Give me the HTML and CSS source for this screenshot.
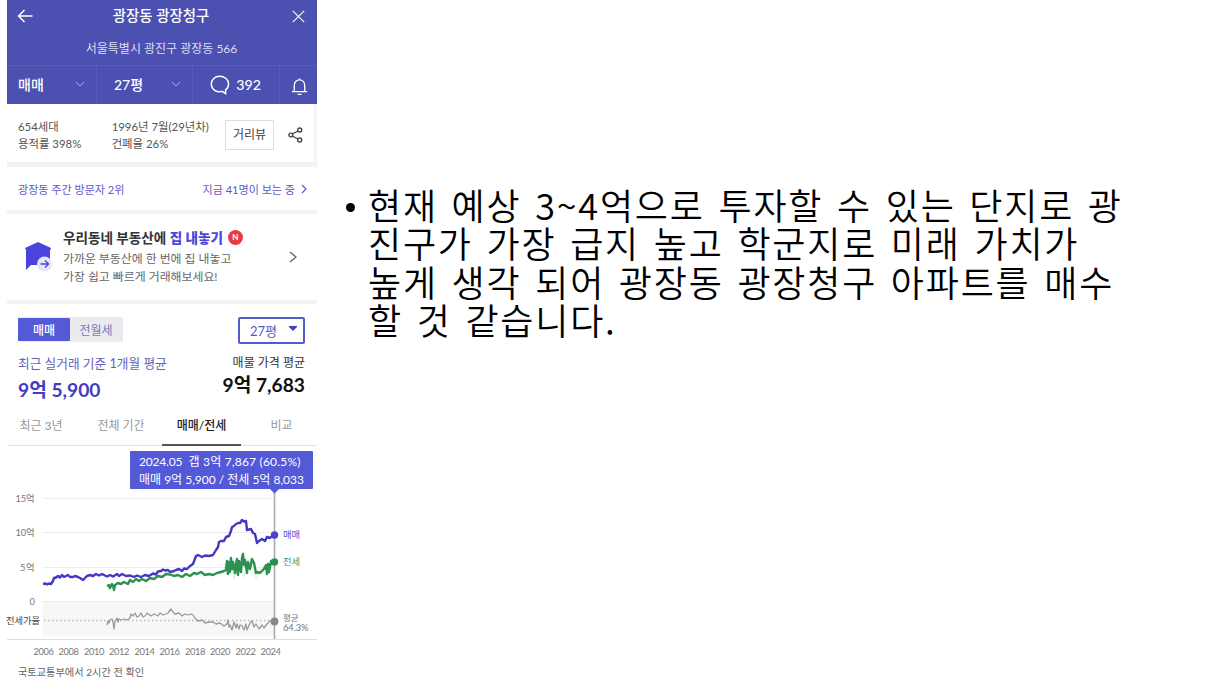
FILE: index.html
```
<!DOCTYPE html>
<html lang="ko">
<head>
<meta charset="utf-8">
<title>광장동 광장청구</title>
<link rel="stylesheet" href="styles.css">
</head>
<body>
<div class="slide">
  <aside class="phone">
    <header class="top">
      <div class="title-row">
        <svg class="icon" width="16" height="14" viewBox="0 0 16 14"><path d="M15.500 7H1.500M7.500 1L1.500 7L7.500 13" stroke-width="1.500"/></svg>
        <h1 class="title">광장동 광장청구</h1>
        <svg class="icon" width="13" height="13" viewBox="0 0 13 13"><path d="M.8.8L12.200 12.200M12.200.8L.8 12.200" stroke-width="1.100"/></svg>
      </div>
      <div class="address">서울특별시 광진구 광장동 566</div>
      <div class="filters">
        <div class="filter kind">매매<svg class="icon dim" width="10" height="6" viewBox="0 0 10 6"><path d="M1 1L5 5L9 1"/></svg></div>
        <div class="filter size">27평<svg class="icon dim" width="10" height="6" viewBox="0 0 10 6"><path d="M1 1L5 5L9 1"/></svg></div>
        <div class="filter talk"><svg class="icon" width="20" height="20" viewBox="0 0 20 20"><path d="M12 16.400C7 18 1.300 14.500 1.300 9C1.300 4.500 5 1.300 9.800 1.300S18.600 4.700 18.600 9C18.600 11.300 17.300 13.600 15.600 14.800V18.600Z" stroke-width="1.500"/></svg>392</div>
        <div class="filter bell"><svg class="icon" width="17" height="19" viewBox="0 0 18 20"><path d="M3.500 15V9C3.500 5.500 5.700 3 9 3S14.500 5.500 14.500 9V15M1 15.500H17M9 3V1.500M7 18.300H11" stroke-width="1.400"/></svg></div>
      </div>
    </header>

    <section class="info">
      <div class="facts first">654세대<br>용적률 398%</div>
      <div class="facts second">1996년 7월(29년차)<br>건폐율 26%</div>
      <div class="review">거리뷰</div>
      <svg class="share" width="15" height="16" viewBox="0 0 15 16"><path d="M4.200 7L10 4M4.200 9L10 12"/><circle cx="2.800" cy="8" r="1.900"/><circle cx="11.700" cy="3" r="2"/><circle cx="11.700" cy="13" r="2"/></svg>
    </section>

    <section class="visitors">
      <span class="rank">광장동 주간 방문자 2위</span>
      <span class="now">지금 41명이 보는 중<svg width="6" height="10" viewBox="0 0 6 10"><path d="M1 1L5 5L1 9"/></svg></span>
    </section>

    <section class="promo">
      <svg class="house" width="28" height="30" viewBox="0 0 28 30"><path d="M0 6L13 0L26 6L25 9V23H6L1 28V8Z" fill="#4b43dc"/><circle cx="19.500" cy="22" r="7.500" fill="#e5e5fc"/><path d="M15.500 22H23M20 18.500L23.500 22L20 25.500" fill="none" stroke="#4b43dc" stroke-width="1.400"/></svg>
      <div class="promo-copy">
        <div class="promo-title"><span>우리동네 부동산에 <b>집 내놓기</b></span><i class="new">N</i></div>
        <div class="promo-line">가까운 부동산에 한 번에 집 내놓고</div>
        <div class="promo-line">가장 쉽고 빠르게 거래해보세요!</div>
      </div>
      <svg class="go" width="8" height="12" viewBox="0 0 8 12"><path d="M1 1L7 6L1 11"/></svg>
    </section>

    <section class="price">
      <div class="switches">
        <div class="segment"><span class="on">매매</span><span class="off">전월세</span></div>
        <div class="select">27평<svg width="8" height="5" viewBox="0 0 8 5"><path d="M0 0H8V1L4 5L0 1Z" fill="#3f43b4"/></svg></div>
      </div>
      <div class="averages">
        <div class="recent"><div class="caption">최근 실거래 기준 1개월 평균</div><div class="amount">9억 5,900</div></div>
        <div class="listing"><div class="caption">매물 가격 평균</div><div class="amount">9억 7,683</div></div>
      </div>
    </section>

    <nav class="tabs"><span class="t1">최근 3년</span><span class="t2">전체 기간</span><span class="t3">매매/전세</span><span class="t4">비교</span></nav>

    <svg class="chart" width="313" height="214" viewBox="4 446 313 214">
      <rect x="43" y="601" width="231" height="35" fill="#f7f7f7"/>
      <path d="M43 498.500H274M43 532.500H274M43 567.500H274M43 601.500H274" stroke="#ededed"/>
      <path d="M7 639.500H317" stroke="#dedede"/>
      <path d="M44 620.500H274" stroke="#bbb" stroke-width="1.300" stroke-dasharray="1.500 2.500"/>
      <path d="M274.500 487V639" stroke="#aaa" stroke-width="1.600"/>
      <path class="ratio" d="M107 625L108 621L109 623L110 620L112 619L113 622L114 629L115 621L117 618L118 622L119 619L121 620L124 619L127 620L130 618L131 614L133 616L135 613L137 617L139 616L141 613L143 617L145 616L147 613L151 616L154 614L158 616L160 613L163 615L166 614L168 613L171 609L173 612L175 614L179 613L182 616L185 614L188 615L191 614L193 615L195 618L198 621L202 620L205 623L209 622L213 622L216 624L220 623L224 626L227 624L228 620L229 627L230 625L232 630L234 622L236 628L237 624L239 629L240 625L242 626L244 630L246 624L247 630L250 623L252 621L254 627L256 624L259 629L262 625L264 628L267 624L270 621L272 622L274 621.500"/>
      <path class="sale" d="M43 584L46 583.500L47 584.500L49 583.500L51 584L53 581L54 578L56 577.500L58 576L60 577.500L62 575L64 577L66 576L68 575L70 577L73 577L75 576L78 577L80 578L83 580L85 578L87 576L90 575L93 576L96 574L99 575.500L102 574L105 575.500L107 576.500L110 575L113 576.500L117 574L119 576L122 574L126 576L130 575.500L134 577L137 575.500L141 577L145 575L149 576L153 573.500L156 574.500L158 571.500L161 571L163 569.500L165 570.500L168 570L170 572L174 571L176 570L179 569L182 571L184 568.500L187 569L190 566L193 564L196 556L198 555L202 557L205 555.500L209 556L213 555L216 550L218 547L219 542L221 541L224 541L226 537L229 536L231 531L232 527L234 526L236 524L238 523L240 523L242 520L244 521.500L246 521L247 530L251 529L253 533L255 534L257 543L259 541L262 539L265 541L267 537L270 538L272 536L274 535"/>
      <path class="rent-haze" d="M224 563L227 575L230 559L234 579L239 561L244 577L250 559L256 578L263 566L270 574"/>
      <path class="rent" d="M107 586L109 585L110 588L112 584L113 586L114 590L115 585L118 583L121 584L124 582L128 584L130 580L133 582L136 579L139 581L142 579L146 581L150 578L154 579L158 576L162 577L166 574L170 574.500L174 576L178 575L182 577L186 574L190 576L194 573L197 574L201 572L205 575L209 574L213 575L217 573L221 572L224 571L226 570L227 561L228 574L229 562L230 572L231 558L232 569L233 562L235 573L236 564L237 559L238 575L239 561L241 572L242 558L243 554L244 565L245 560L247 573L248 562L250 569L252 559L254 563L256 573L258 572L260 573L262 571L264 569L266 565L267 574L268 564L269 572L271 561L272 564L274 562"/>
      <circle cx="274.500" cy="535" r="3.700" fill="#4b43ce"/><circle cx="274.500" cy="562" r="3.700" fill="#2c9150"/><circle cx="274.500" cy="621.500" r="3.900" fill="#888"/>
      <g class="axis">
        <text x="15.500" y="501.500" textLength="19">15억</text><text x="15.500" y="536" textLength="19">10억</text><text x="20" y="570.500" textLength="14.500">5억</text><text x="29.500" y="604.500">0</text>
        <text class="rate" x="6" y="623.500" textLength="34">전세가율</text>
        <text x="33.500" y="655" textLength="20.500">2006</text><text x="58.500" y="655" textLength="20.500">2008</text><text x="84" y="655" textLength="20.500">2010</text><text x="109" y="655" textLength="20.500">2012</text><text x="134.500" y="655" textLength="20.500">2014</text><text x="159.500" y="655" textLength="20.500">2016</text><text x="185" y="655" textLength="20.500">2018</text><text x="210" y="655" textLength="20.500">2020</text><text x="235.500" y="655" textLength="20.500">2022</text><text x="260.500" y="655" textLength="20.500">2024</text>
        <text x="283" y="538" textLength="17" fill="#564fd0">매매</text><text x="283" y="564.500" textLength="17" fill="#3e9b5e">전세</text>
        <text x="283" y="620.500" textLength="15.500" font-size="8.500">평균</text><text x="283" y="631" textLength="25.500">64.3%</text>
      </g>
      <path d="M131 451H312Q313 451 313 452V488Q313 489 312 489H279L274.500 493.500L270 489H131Q130 489 130 488V452Q130 451 131 451Z" fill="#5459d8"/>
      <g class="tip"><text x="139" y="465.500" textLength="43.500">2024.05</text><text x="188.500" y="465.500" textLength="112">갭 3억 7,867 (60.5%)</text><text x="139" y="483.500" textLength="165">매매 9억 5,900 / 전세 5억 8,033</text></g>
    </svg>
    <footer class="source">국토교통부에서 2시간 전 확인</footer>
  </aside>

  <main class="note">
    <span class="bullet"></span>
    <p class="body-text">현재 예상 3~4억으로 투자할 수 있는 단지로 광<br>진구가 가장 급지 높고 학군지로 미래 가치가<br>높게 생각 되어 광장동 광장청구 아파트를 매수<br>할 것 같습니다.</p>
  </main>
</div>
</body>
</html>
```
FILE: styles.css
```
* { box-sizing: border-box; }
body { margin: 0; background: #fff; font-family: Lato, "Noto Sans CJK KR", sans-serif; }
.slide { display: flex; width: 1216px; height: 684px; overflow: hidden; }
.phone { width: 310px; height: 684px; margin-left: 7px; flex: none; display: flex; flex-direction: column; white-space: nowrap; }
.phone > * { flex: none; }
svg { display: block; flex: none; }
.icon { fill: none; stroke: #fff; }
.dim { stroke: #a5a7e4; }

.top { height: 104px; background: #4c51b1; color: #fff; }
.title-row { height: 32px; padding: 0 12px 0 10px; display: flex; align-items: center; justify-content: space-between; }
.title { margin: 0 3px 0 0; font-size: 14.400px; line-height: 20px; font-weight: 500; }
.address { height: 33px; line-height: 34px; padding-right: 1px; text-align: center; font-size: 12px; color: #dcddf5; }
.filters { height: 39px; display: flex; border-top: 1px solid #565bb9; }
.filter { display: flex; align-items: center; justify-content: space-between; border-right: 1px solid #565bb9; font-size: 14px; font-weight: 500; }
.kind { width: 90px; padding: 0 11px 2px; }
.size { width: 96px; padding: 0 11px 2px 17px; }
.talk { width: 87px; padding: 0 18px 1px 17px; font-size: 14.200px; }
.bell { width: 37px; padding: 2px 0 0 11px; border: 0; }

.info { height: 58px; display: flex; align-items: center; padding: 4px 14px 0 11px; color: #555; font-size: 11.400px; line-height: 17px; box-shadow: inset -3px 0 #f7f7f7; }
.first { width: 94px; }
.second { width: 114px; }
.review { width: 49px; height: 30px; border: 1px solid #ddd; text-align: center; line-height: 27px; font-size: 12px; color: #444; }
.share { margin-left: 14px; fill: none; stroke: #444; stroke-width: 1.400; }

.visitors { height: 48px; border-top: 5px solid #f3f3f3; padding: 1px 10px 0 11px; display: flex; align-items: center; justify-content: space-between; color: #6058cf; font-size: 11.050px; }
.now { display: flex; align-items: center; gap: 6px; }
.now svg { fill: none; stroke: #6058cf; stroke-width: 1.200; }

.promo { height: 94px; border-top: 4px solid #f3f3f3; border-bottom: 4px solid #f3f3f3; display: flex; padding: 14px 20px 0 18px; }
.house { margin-top: 14px; }
.promo-copy { margin-left: 10px; flex: 1; }
.promo-title { display: flex; align-items: center; gap: 5px; height: 20px; padding-bottom: 2px; font-size: 13.600px; font-weight: 700; color: #333; }
.promo-title b { color: #5048d8; }
.new { width: 15px; height: 15px; border-radius: 50%; background: #e83b41; color: #fff; font: 700 8px/15px Lato, sans-serif; text-align: center; }
.promo-line { height: 18px; line-height: 22px; font-size: 11.900px; color: #666; }
.go { margin-top: 23px; fill: none; stroke: #666; stroke-width: 1.400; }

.price { height: 101px; padding: 13px 12px 0 11px; }
.switches { display: flex; justify-content: space-between; height: 27px; }
.segment { display: flex; height: 25px; line-height: 27px; font-size: 12px; text-align: center; background: #ebebef; width: 105px; }
.on { width: 52px; height: 23px; margin-top: 1px; line-height: 25px; background: #5459d8; color: #fff; border-radius: 1px; font-weight: 500; }
.off { width: 52px; color: #7779bc; }
.select { width: 67px; height: 27px; border: 2px solid #5459d0; border-radius: 2px; display: flex; justify-content: space-between; padding: 0 6px 0 10px; align-items: center; font-size: 13px; color: #5559bd; }
.select svg { margin-bottom: 5px; }
.averages { display: flex; justify-content: space-between; padding-top: 9px; }
.recent .caption { font-size: 12.700px; line-height: 21px; color: #6562bd; }
.recent .amount { font-size: 19.200px; line-height: 32px; font-weight: 700; color: #443bc4; }
.listing { text-align: right; }
.listing .caption { font-size: 12px; line-height: 19px; color: #333; }
.listing .amount { font-size: 19.200px; line-height: 26px; font-weight: 700; color: #111; }

.tabs { height: 41px; border-bottom: 1px solid #e3e3e3; display: flex; font-size: 12px; line-height: 42px; color: #999; text-align: center; }
.tabs span { flex: none; }
.t1 { width: 68px; }
.t2 { width: 87px; padding-left: 5px; }
.t3 { width: 79px; height: 41px; border-bottom: 2px solid #555; color: #222; font-weight: 500; }
.t4 { width: 76px; padding-left: 5px; }

.chart { margin-left: -3px; }
.ratio { fill: none; stroke: #999; stroke-width: 1.300; stroke-linejoin: round; }
.sale, .rent { fill: none; stroke: #4338c4; stroke-width: 2.400; stroke-linejoin: round; }
.rent { stroke: #2c9150; }
.rent-haze { fill: none; stroke: #dff1df; stroke-width: 1; }
.axis { font-size: 9.300px; fill: #777; }
.rate { fill: #444; }
.tip { font-size: 12px; fill: #fff; }
.source { padding-left: 11px; font-size: 10.200px; line-height: 25px; color: #666; }

.note { display: flex; padding: 185px 0 0 29px; color: #000; }
.bullet { width: 9px; height: 9px; margin: 18px 13px 0 0; border-radius: 50%; background: #000; }
.body-text { margin: 0; font-family: "Noto Sans CJK KR", sans-serif; font-size: 36px; font-weight: 350; line-height: 38.300px; letter-spacing: 1.800px; word-spacing: 1.900px; white-space: nowrap; }
```
